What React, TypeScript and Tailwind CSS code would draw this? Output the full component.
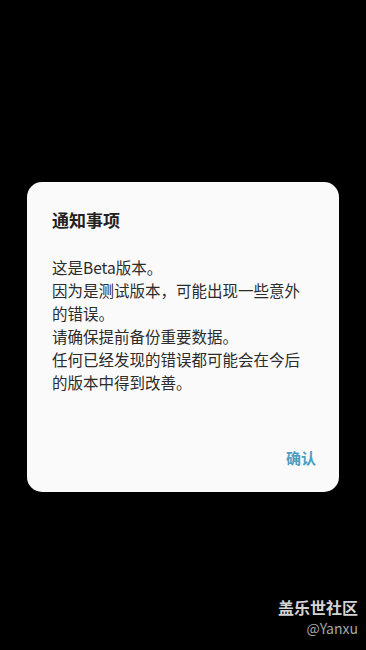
export default function App() {
  const font = { fontFamily: '"Noto Sans CJK SC", "Noto Sans", sans-serif' }

  return (
    <div className="relative h-[650px] w-[366px] overflow-hidden bg-black" style={font}>
      <div className="px-[27px] pt-[182px]">
        {/* Dialog */}
        <div className="flex h-[310px] flex-col rounded-[15px] bg-[#fafafa] px-[25px] pt-[26px] pb-[23px]">
          <h2 className="text-[17px] leading-[24px] font-bold text-[#222]">通知事项</h2>
          <div className="mt-[24px] w-[252px] text-[15.5px] leading-[23px] text-[#2c2c2c]">
            <p>这是Beta版本。</p>
            <p>因为是测试版本，可能出现一些意外的错误。</p>
            <p>请确保提前备份重要数据。</p>
            <p>任何已经发现的错误都可能会在今后的版本中得到改善。</p>
          </div>
          <div className="mt-auto flex justify-end">
            <button className="mr-[-2px] text-[15px] leading-[23px] font-semibold text-[#4e9ec0]">确认</button>
          </div>
        </div>
      </div>

      {/* Watermark */}
      <div className="absolute top-[596px] right-[8px] flex flex-col items-end">
        <span className="text-[16px] leading-[22px] font-bold text-[#d4d4d4]">盖乐世社区</span>
        <span className="text-[14px] leading-[20px] text-[#a6a6a6]">@Yanxu</span>
      </div>
    </div>
  )
}
